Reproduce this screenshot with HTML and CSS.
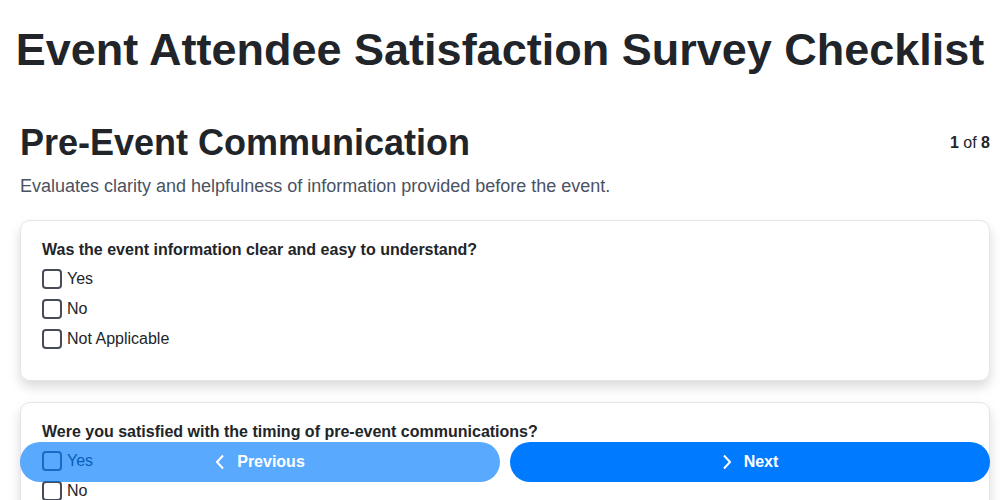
FILE: index.html
```html
<!DOCTYPE html>
<html lang="en">
<head>
    <meta charset="UTF-8">
    <meta name="viewport" content="width=device-width, initial-scale=1.0">
    <title>Event Attendee Satisfaction Survey Checklist</title>
    <link rel="stylesheet" href="styles.css">
</head>
<body>
    <h1 class="page-title">Event Attendee Satisfaction Survey Checklist</h1>

    <div class="survey">
        <!-- Cabeçalho da seção -->
        <div class="section-head">
            <h2>Pre-Event Communication</h2>
            <div class="progress"><b>1</b> of <b>8</b></div>
        </div>
        <p class="section-desc">Evaluates clarity and helpfulness of information provided before the event.</p>

        <div class="card">
            <div class="question">Was the event information clear and easy to understand?</div>
            <label class="option"><input type="checkbox"><span>Yes</span></label>
            <label class="option"><input type="checkbox"><span>No</span></label>
            <label class="option"><input type="checkbox"><span>Not Applicable</span></label>
        </div>

        <div class="card">
            <div class="question">Were you satisfied with the timing of pre-event communications?</div>
            <label class="option"><input type="checkbox"><span>Yes</span></label>
            <label class="option"><input type="checkbox"><span>No</span></label>
            <label class="option"><input type="checkbox"><span>Not Applicable</span></label>
        </div>
    </div>

    <!-- Navegação -->
    <div class="nav">
        <button class="nav-btn prev" disabled>
            <svg width="10" height="16" viewBox="0 0 10 16"><path d="M8 1.5 L2 8 L8 14.5" fill="none" stroke="#fff" stroke-width="2"/></svg>
            Previous
        </button>
        <button class="nav-btn next">
            <svg width="10" height="16" viewBox="0 0 10 16"><path d="M2 1.5 L8 8 L2 14.5" fill="none" stroke="#fff" stroke-width="2"/></svg>
            Next
        </button>
    </div>
</body>
</html>
```

FILE: styles.css
```css
body {
    margin: 0;
    padding: 0;
    font-family: 'Liberation Sans', Arial, sans-serif;
    background-color: #fff;
    color: #212529;
}

.page-title {
    margin: 0;
    padding-top: 23px;
    font-size: 45px;
    line-height: 1.2;
    font-weight: bold;
    text-align: center;
}

.survey {
    padding: 0 10px 100px 20px;
}

.section-head {
    display: flex;
    justify-content: space-between;
    align-items: center;
    margin-top: 44px;
}

.section-head h2 {
    margin: 0;
    font-size: 36px;
    line-height: 1.2;
}

.progress {
    font-size: 16px;
    color: #212529;
}

.section-desc {
    margin: 12px 0 23px;
    font-size: 18px;
    color: #4a5263;
}

.card {
    border: 1px solid #e4e4ea;
    border-radius: 10px;
    padding: 17px 21px 26px;
    margin-bottom: 21px;
    box-shadow: 0 6px 12px rgba(0, 0, 0, 0.15);
}

.question {
    font-size: 16px;
    line-height: 24px;
    font-weight: bold;
    margin-bottom: 2px;
}

.option {
    display: flex;
    align-items: center;
    height: 30px;
    font-size: 16px;
}

.option input {
    appearance: none;
    width: 20px;
    height: 20px;
    margin: 0 5px 0 0;
    border: 2px solid #464b57;
    border-radius: 4px;
    background: #fff;
}

.nav {
    position: fixed;
    left: 20px;
    right: 10px;
    bottom: 18px;
    display: flex;
    gap: 10px;
}

.nav-btn {
    flex: 1;
    height: 40px;
    border: none;
    border-radius: 20px;
    background-color: #007bff;
    color: #fff;
    font-family: 'Liberation Sans', Arial, sans-serif;
    font-size: 16px;
    font-weight: bold;
    display: flex;
    align-items: center;
    justify-content: center;
    gap: 12px;
}

.nav-btn.prev {
    opacity: 0.65;
}
```
